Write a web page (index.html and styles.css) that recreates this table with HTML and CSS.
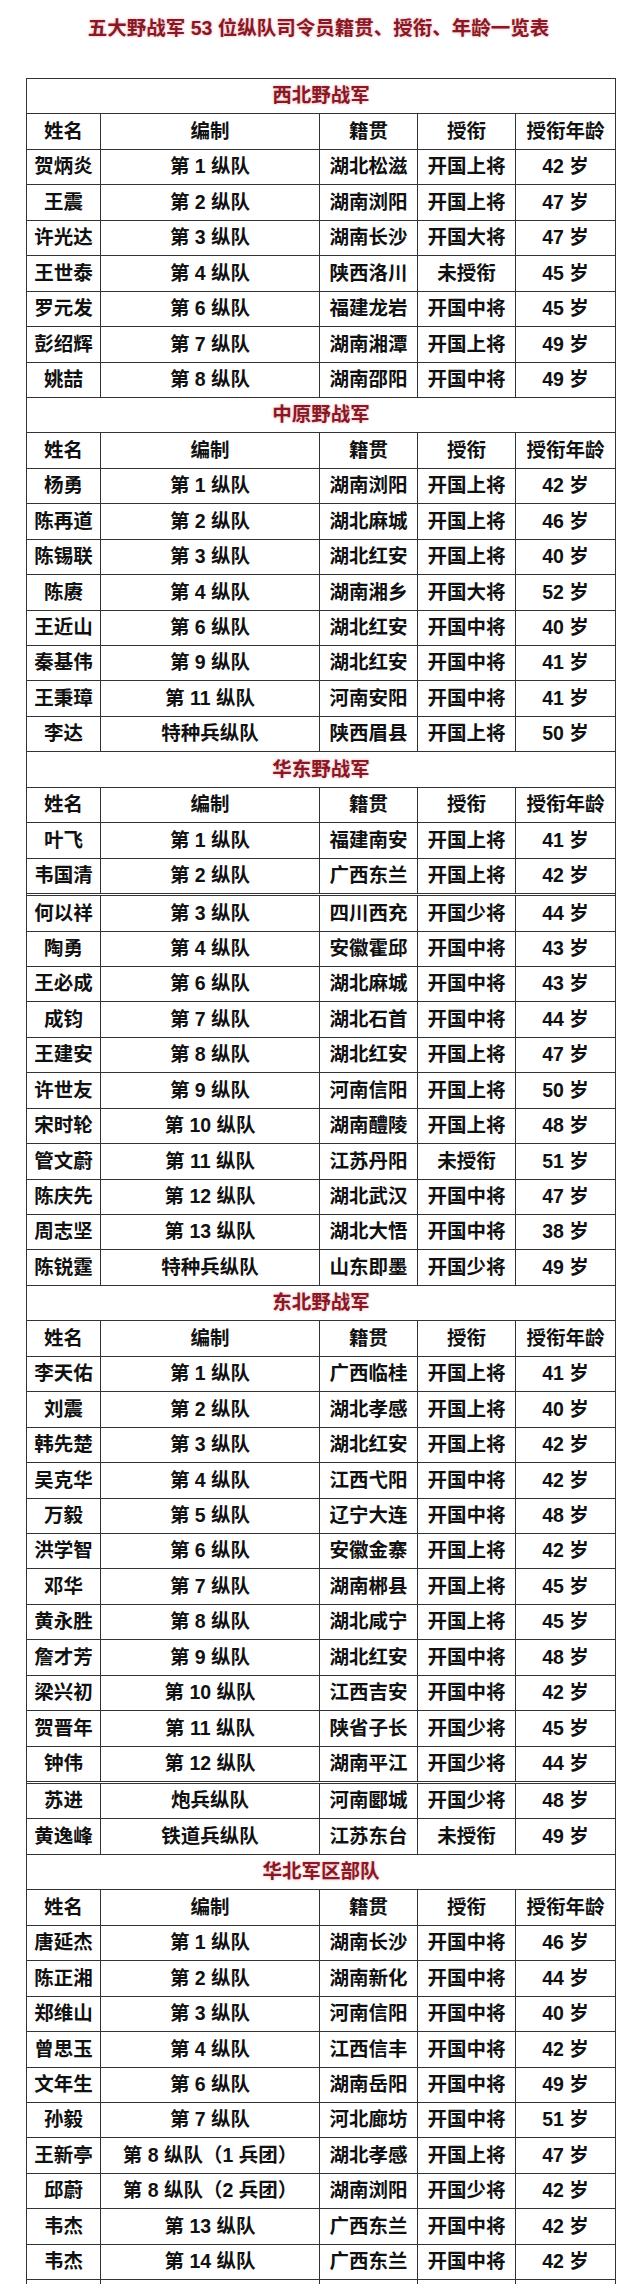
FILE: index.html
```html
<!DOCTYPE html>
<html lang="zh-CN">
<head>
<meta charset="utf-8">
<title>五大野战军 53 位纵队司令员籍贯、授衔、年龄一览表</title>
<link rel="stylesheet" href="styles.css">
</head>
<body>
<h1 class="title">五大野战军 53 位纵队司令员籍贯、授衔、年龄一览表</h1>
<table class="roster">
<colgroup><col class="c-name"><col class="c-unit"><col class="c-origin"><col class="c-rank"><col class="c-age"></colgroup>
<tbody>
<tr class="section"><td colspan="5">西北野战军</td></tr>
<tr class="head"><td>姓名</td><td>编制</td><td>籍贯</td><td>授衔</td><td>授衔年龄</td></tr>
<tr><td>贺炳炎</td><td>第 1 纵队</td><td>湖北松滋</td><td>开国上将</td><td>42 岁</td></tr>
<tr><td>王震</td><td>第 2 纵队</td><td>湖南浏阳</td><td>开国上将</td><td>47 岁</td></tr>
<tr><td>许光达</td><td>第 3 纵队</td><td>湖南长沙</td><td>开国大将</td><td>47 岁</td></tr>
<tr><td>王世泰</td><td>第 4 纵队</td><td>陕西洛川</td><td>未授衔</td><td>45 岁</td></tr>
<tr><td>罗元发</td><td>第 6 纵队</td><td>福建龙岩</td><td>开国中将</td><td>45 岁</td></tr>
<tr><td>彭绍辉</td><td>第 7 纵队</td><td>湖南湘潭</td><td>开国上将</td><td>49 岁</td></tr>
<tr><td>姚喆</td><td>第 8 纵队</td><td>湖南邵阳</td><td>开国中将</td><td>49 岁</td></tr>

<tr class="section"><td colspan="5">中原野战军</td></tr>
<tr class="head"><td>姓名</td><td>编制</td><td>籍贯</td><td>授衔</td><td>授衔年龄</td></tr>
<tr><td>杨勇</td><td>第 1 纵队</td><td>湖南浏阳</td><td>开国上将</td><td>42 岁</td></tr>
<tr><td>陈再道</td><td>第 2 纵队</td><td>湖北麻城</td><td>开国上将</td><td>46 岁</td></tr>
<tr><td>陈锡联</td><td>第 3 纵队</td><td>湖北红安</td><td>开国上将</td><td>40 岁</td></tr>
<tr><td>陈赓</td><td>第 4 纵队</td><td>湖南湘乡</td><td>开国大将</td><td>52 岁</td></tr>
<tr><td>王近山</td><td>第 6 纵队</td><td>湖北红安</td><td>开国中将</td><td>40 岁</td></tr>
<tr><td>秦基伟</td><td>第 9 纵队</td><td>湖北红安</td><td>开国中将</td><td>41 岁</td></tr>
<tr><td>王秉璋</td><td>第 11 纵队</td><td>河南安阳</td><td>开国中将</td><td>41 岁</td></tr>
<tr><td>李达</td><td>特种兵纵队</td><td>陕西眉县</td><td>开国上将</td><td>50 岁</td></tr>

<tr class="section"><td colspan="5">华东野战军</td></tr>
<tr class="head"><td>姓名</td><td>编制</td><td>籍贯</td><td>授衔</td><td>授衔年龄</td></tr>
<tr><td>叶飞</td><td>第 1 纵队</td><td>福建南安</td><td>开国上将</td><td>41 岁</td></tr>
<tr><td>韦国清</td><td>第 2 纵队</td><td>广西东兰</td><td>开国上将</td><td>42 岁</td></tr>
<tr class="seam"><td colspan="5"></td></tr>
<tr><td>何以祥</td><td>第 3 纵队</td><td>四川西充</td><td>开国少将</td><td>44 岁</td></tr>
<tr><td>陶勇</td><td>第 4 纵队</td><td>安徽霍邱</td><td>开国中将</td><td>43 岁</td></tr>
<tr><td>王必成</td><td>第 6 纵队</td><td>湖北麻城</td><td>开国中将</td><td>43 岁</td></tr>
<tr><td>成钧</td><td>第 7 纵队</td><td>湖北石首</td><td>开国中将</td><td>44 岁</td></tr>
<tr><td>王建安</td><td>第 8 纵队</td><td>湖北红安</td><td>开国上将</td><td>47 岁</td></tr>
<tr><td>许世友</td><td>第 9 纵队</td><td>河南信阳</td><td>开国上将</td><td>50 岁</td></tr>
<tr><td>宋时轮</td><td>第 10 纵队</td><td>湖南醴陵</td><td>开国上将</td><td>48 岁</td></tr>
<tr><td>管文蔚</td><td>第 11 纵队</td><td>江苏丹阳</td><td>未授衔</td><td>51 岁</td></tr>
<tr><td>陈庆先</td><td>第 12 纵队</td><td>湖北武汉</td><td>开国中将</td><td>47 岁</td></tr>
<tr><td>周志坚</td><td>第 13 纵队</td><td>湖北大悟</td><td>开国中将</td><td>38 岁</td></tr>
<tr><td>陈锐霆</td><td>特种兵纵队</td><td>山东即墨</td><td>开国少将</td><td>49 岁</td></tr>

<tr class="section"><td colspan="5">东北野战军</td></tr>
<tr class="head"><td>姓名</td><td>编制</td><td>籍贯</td><td>授衔</td><td>授衔年龄</td></tr>
<tr><td>李天佑</td><td>第 1 纵队</td><td>广西临桂</td><td>开国上将</td><td>41 岁</td></tr>
<tr><td>刘震</td><td>第 2 纵队</td><td>湖北孝感</td><td>开国上将</td><td>40 岁</td></tr>
<tr><td>韩先楚</td><td>第 3 纵队</td><td>湖北红安</td><td>开国上将</td><td>42 岁</td></tr>
<tr><td>吴克华</td><td>第 4 纵队</td><td>江西弋阳</td><td>开国中将</td><td>42 岁</td></tr>
<tr><td>万毅</td><td>第 5 纵队</td><td>辽宁大连</td><td>开国中将</td><td>48 岁</td></tr>
<tr><td>洪学智</td><td>第 6 纵队</td><td>安徽金寨</td><td>开国上将</td><td>42 岁</td></tr>
<tr><td>邓华</td><td>第 7 纵队</td><td>湖南郴县</td><td>开国上将</td><td>45 岁</td></tr>
<tr><td>黄永胜</td><td>第 8 纵队</td><td>湖北咸宁</td><td>开国上将</td><td>45 岁</td></tr>
<tr><td>詹才芳</td><td>第 9 纵队</td><td>湖北红安</td><td>开国中将</td><td>48 岁</td></tr>
<tr><td>梁兴初</td><td>第 10 纵队</td><td>江西吉安</td><td>开国中将</td><td>42 岁</td></tr>
<tr><td>贺晋年</td><td>第 11 纵队</td><td>陕省子长</td><td>开国少将</td><td>45 岁</td></tr>
<tr><td>钟伟</td><td>第 12 纵队</td><td>湖南平江</td><td>开国少将</td><td>44 岁</td></tr>
<tr class="seam"><td colspan="5"></td></tr>
<tr><td>苏进</td><td>炮兵纵队</td><td>河南郾城</td><td>开国少将</td><td>48 岁</td></tr>
<tr><td>黄逸峰</td><td>铁道兵纵队</td><td>江苏东台</td><td>未授衔</td><td>49 岁</td></tr>

<tr class="section"><td colspan="5">华北军区部队</td></tr>
<tr class="head"><td>姓名</td><td>编制</td><td>籍贯</td><td>授衔</td><td>授衔年龄</td></tr>
<tr><td>唐延杰</td><td>第 1 纵队</td><td>湖南长沙</td><td>开国中将</td><td>46 岁</td></tr>
<tr><td>陈正湘</td><td>第 2 纵队</td><td>湖南新化</td><td>开国中将</td><td>44 岁</td></tr>
<tr><td>郑维山</td><td>第 3 纵队</td><td>河南信阳</td><td>开国中将</td><td>40 岁</td></tr>
<tr><td>曾思玉</td><td>第 4 纵队</td><td>江西信丰</td><td>开国中将</td><td>42 岁</td></tr>
<tr><td>文年生</td><td>第 6 纵队</td><td>湖南岳阳</td><td>开国中将</td><td>49 岁</td></tr>
<tr><td>孙毅</td><td>第 7 纵队</td><td>河北廊坊</td><td>开国中将</td><td>51 岁</td></tr>
<tr><td>王新亭</td><td>第 8 纵队（1 兵团）</td><td>湖北孝感</td><td>开国上将</td><td>47 岁</td></tr>
<tr><td>邱蔚</td><td>第 8 纵队（2 兵团）</td><td>湖南浏阳</td><td>开国少将</td><td>42 岁</td></tr>
<tr><td>韦杰</td><td>第 13 纵队</td><td>广西东兰</td><td>开国中将</td><td>42 岁</td></tr>
<tr><td>韦杰</td><td>第 14 纵队</td><td>广西东兰</td><td>开国中将</td><td>42 岁</td></tr>
<tr><td>&nbsp;</td><td>&nbsp;</td><td>&nbsp;</td><td>&nbsp;</td><td>&nbsp;</td></tr>
</tbody>
</table>
</body>
</html>
```

FILE: styles.css
```css
html, body {
  margin: 0;
  padding: 0;
  background: #ffffff;
}

body {
  font-family: "Liberation Sans", "Noto Sans CJK SC", sans-serif;
  color: #111111;
}

.title {
  margin: 0;
  height: 78px;
  box-sizing: border-box;
  padding-top: 15px;
  font-size: 19.5px;
  line-height: 26px;
  font-weight: 700;
  text-align: center;
  color: #861a24;
  text-shadow: 0 0 3px rgba(236, 130, 150, 0.75);
}

.roster {
  margin-left: 26px;
  width: 589px;
  border-collapse: collapse;
  table-layout: fixed;
  font-size: 19.5px;
  font-weight: 700;
}

.c-name { width: 74px; }
.c-unit { width: 219px; }
.c-origin { width: 98px; }
.c-rank { width: 98px; }
.c-age { width: 100px; }

.roster tr {
  height: 35.45px;
}

.roster td {
  border: 1px solid #333333;
  padding: 0;
  text-align: center;
  vertical-align: middle;
  line-height: 1;
  white-space: nowrap;
}

.section td {
  color: #861a24;
  text-shadow: 0 0 3px rgba(236, 130, 150, 0.75);
}

.roster tr.seam {
  height: 2px;
}

.seam td {
  font-size: 0;
  line-height: 0;
}
```
